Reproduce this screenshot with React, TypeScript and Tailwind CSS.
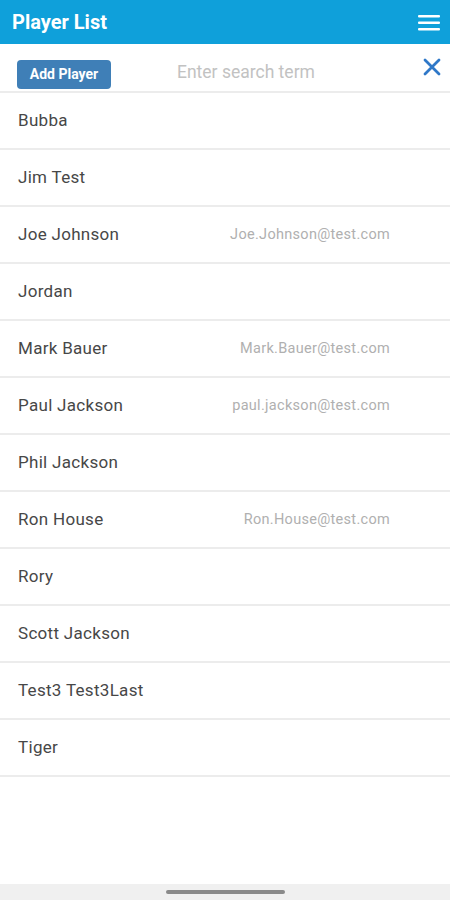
import React from 'react';

interface Player {
  id: number;
  name: string;
  email?: string;
}

const players: Player[] = [
  { id: 1, name: 'Bubba' },
  { id: 2, name: 'Jim Test' },
  { id: 3, name: 'Joe Johnson', email: 'Joe.Johnson@test.com' },
  { id: 4, name: 'Jordan' },
  { id: 5, name: 'Mark Bauer', email: 'Mark.Bauer@test.com' },
  { id: 6, name: 'Paul Jackson', email: 'paul.jackson@test.com' },
  { id: 7, name: 'Phil Jackson' },
  { id: 8, name: 'Ron House', email: 'Ron.House@test.com' },
  { id: 9, name: 'Rory' },
  { id: 10, name: 'Scott Jackson' },
  { id: 11, name: 'Test3 Test3Last' },
  { id: 12, name: 'Tiger' },
];

const App: React.FC = () => {
  return (
    <div className="w-[450px] h-[900px] flex flex-col bg-white font-['Roboto',sans-serif]">
      <div className="h-[44px] bg-[#0fa0da] flex items-center justify-between pl-[12px] pr-[9px]">
        <h1 className="text-white text-[20px] font-bold">Player List</h1>
        <svg width="24" height="20" viewBox="0 0 24 20">
          <rect x="1" y="3" width="22" height="2.6" rx="1" fill="white" />
          <rect x="1" y="9.5" width="22" height="2.6" rx="1" fill="white" />
          <rect x="1" y="16" width="22" height="2.6" rx="1" fill="white" />
        </svg>
      </div>

      <div className="h-[49px] flex items-start pl-[17px] pr-[9px] border-b-2 border-[#ececec]">
        <button className="h-[29px] w-[94px] mt-[16px] rounded-[4px] bg-[#3f7fb7] text-white text-[14px] font-bold">
          Add Player
        </button>
        <input
          className="flex-1 ml-[66px] mt-[17px] h-[22px] text-[17.5px] text-[#555] placeholder:text-[#c2c2c2] outline-none bg-transparent"
          placeholder="Enter search term"
        />
        <svg width="18" height="18" viewBox="0 0 18 18" className="mt-[14px]">
          <path d="M2 2 L16 16 M16 2 L2 16" stroke="#2f78c8" strokeWidth="2.8" strokeLinecap="round" />
        </svg>
      </div>

      <div className="flex-1">
        {players.map((p) => (
          <div key={p.id} className="h-[57px] flex items-center justify-between pl-[18px] pr-[60px] border-b-2 border-[#ececec]">
            <span className="text-[17px] text-[#474747] tracking-[0.3px]">{p.name}</span>
            {p.email && <span className="text-[14.5px] text-[#b0b0b0] tracking-[0.3px]">{p.email}</span>}
          </div>
        ))}
      </div>

      <div className="h-[16px] bg-[#f0f0f0] flex items-center justify-center">
        <div className="w-[119px] h-[4px] rounded-full bg-[#8a8a8a]" />
      </div>
    </div>
  );
};

export default App;
